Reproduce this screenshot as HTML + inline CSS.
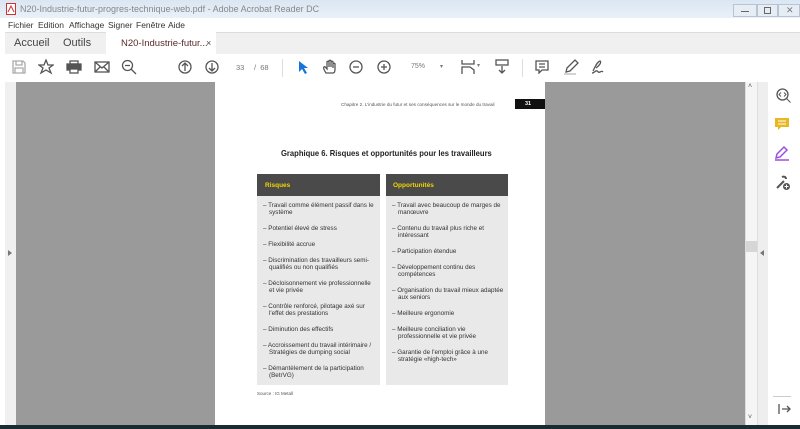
<!DOCTYPE html>
<html><head><meta charset="utf-8"><style>
*{margin:0;padding:0;box-sizing:border-box}
body{width:800px;height:429px;overflow:hidden;background:#fff;font-family:"Liberation Sans",Arial,sans-serif;position:relative}
.abs{position:absolute}
.title{left:0;top:0;width:800px;height:18px;background:linear-gradient(#dbe6f3,#e9f0f8);font-size:9px;color:#888;line-height:18px;padding-left:20px}
.menu{left:0;top:18px;width:800px;height:14px;font-size:8.5px;color:#333;line-height:14px}
.tabs{left:5px;top:32px;width:795px;height:22px;background:#f0f0f0;border-top:1px solid #ddd}
.tb{left:0;top:54px;width:800px;height:28px;background:#fff}
.ic{position:absolute;stroke:#555;fill:none;stroke-width:1.3}
.p li{list-style:none;font-size:6.3px;color:#333;line-height:7.3px;margin-bottom:8.5px;padding-left:6px;text-indent:-6px}
</style></head><body>
<div class="abs title">N20-Industrie-futur-progres-technique-web.pdf - Adobe Acrobat Reader DC</div>
<svg class="abs" style="left:6px;top:3px" width="10" height="12"><rect x="0.5" y="0.5" width="9" height="11" fill="#fff" stroke="#c33"/><path d="M2 9 L5 3 L8 9" stroke="#c33" fill="none"/></svg>
<div class="abs" style="left:733px;top:4px;width:24px;height:13px;border:1px solid #b8c4d2;background:#e7edf5"></div>
<div class="abs" style="left:757px;top:4px;width:21px;height:13px;border:1px solid #b8c4d2;background:#e7edf5"></div>
<div class="abs" style="left:778px;top:4px;width:22px;height:13px;border:1px solid #b8c4d2;background:#e7edf5"></div>
<div class="abs" style="left:741px;top:11px;width:8px;height:1px;background:#666"></div>
<div class="abs" style="left:764px;top:7px;width:7px;height:7px;border:1px solid #666"></div>
<div class="abs" style="left:786px;top:5px;font-size:9px;color:#777">✕</div>
<div class="abs menu"><span style="position:absolute;left:8px">Fichier</span><span style="position:absolute;left:38px">Edition</span><span style="position:absolute;left:69px">Affichage</span><span style="position:absolute;left:108px">Signer</span><span style="position:absolute;left:136px">Fenêtre</span><span style="position:absolute;left:168px">Aide</span></div>
<div class="abs tabs"></div>
<div class="abs" style="left:14px;top:37px;font-size:11px;color:#444">Accueil</div>
<div class="abs" style="left:63px;top:37px;font-size:11px;color:#444">Outils</div>
<div class="abs" style="left:106px;top:32px;width:110px;height:23px;background:#fff"></div>
<div class="abs" style="left:121px;top:38px;font-size:9.5px;color:#5a2a2a">N20-Industrie-futur...</div>
<div class="abs" style="left:206px;top:38px;font-size:9px;color:#444">×</div>
<div class="abs tb"></div>
<svg class="ic" style="left:12px;top:60px" width="14" height="14"><path d="M1 1h10l2 2v10H1z M4 1v4h6V1 M3 13V8h8v5" stroke="#aaa"/></svg>
<svg class="ic" style="left:38px;top:59px" width="16" height="16"><path d="M8 1l2 5h5l-4 3 2 5-5-3-5 3 2-5-4-3h5z"/></svg>
<svg class="ic" style="left:66px;top:60px" width="16" height="14"><rect x="1" y="4" width="14" height="6" fill="#555"/><rect x="4" y="1" width="8" height="3"/><rect x="4" y="9" width="8" height="4" fill="#fff"/></svg>
<svg class="ic" style="left:94px;top:61px" width="16" height="12"><rect x="1" y="1" width="14" height="10"/><path d="M1 1l7 6 7-6M1 11l5-5M15 11l-5-5"/></svg>
<svg class="ic" style="left:121px;top:59px" width="16" height="16"><circle cx="6.5" cy="6.5" r="5"/><path d="M10 10l5 5M4 6.5h5"/></svg>
<svg class="ic" style="left:178px;top:60px" width="14" height="14"><circle cx="7" cy="7" r="6"/><path d="M7 11V3M4 6l3-3 3 3"/></svg>
<svg class="ic" style="left:205px;top:60px" width="14" height="14"><circle cx="7" cy="7" r="6"/><path d="M7 3v8M4 8l3 3 3-3"/></svg>
<div class="abs" style="left:236px;top:63px;font-size:7.5px;color:#777">33</div>
<div class="abs" style="left:254px;top:63px;font-size:7.5px;color:#777">/ &nbsp;68</div>
<div class="abs" style="left:282px;top:59px;width:1px;height:18px;background:#ddd"></div>
<svg style="position:absolute;left:298px;top:60px" width="10" height="14"><path d="M1 1v11l3-3 3 5 2-1-3-5h4z" fill="#1a73d9"/></svg>
<svg class="ic" style="left:322px;top:59px" width="16" height="16"><path d="M4 14c-2-3-3-5-2-6 1-1 2 1 3 2V3c0-1 2-1 2 0v5V2c0-1 2-1 2 0v6V3c0-1 2-1 2 0v6V5c0-1 2-1 2 0v5c0 3-1 4-2 4z"/></svg>
<svg class="ic" style="left:349px;top:60px" width="14" height="14"><circle cx="7" cy="7" r="6"/><path d="M4 7h6"/></svg>
<svg class="ic" style="left:377px;top:60px" width="14" height="14"><circle cx="7" cy="7" r="6"/><path d="M4 7h6M7 4v6"/></svg>
<div class="abs" style="left:411px;top:63px;font-size:7px;color:#777">75%</div>
<div class="abs" style="left:440px;top:63px;font-size:6px;color:#777">▾</div>
<svg class="ic" style="left:461px;top:59px" width="14" height="16"><path d="M1 1v4h12V1M1 15v-7h8l4 3v4"/></svg>
<div class="abs" style="left:477px;top:62px;font-size:6px;color:#777">▾</div>
<svg class="ic" style="left:495px;top:59px" width="14" height="16"><rect x="1" y="1" width="12" height="5"/><path d="M7 7v7M4 11l3 3 3-3"/></svg>
<div class="abs" style="left:522px;top:59px;width:1px;height:18px;background:#ddd"></div>
<svg class="ic" style="left:535px;top:60px" width="14" height="14"><path d="M1 1h12v9H7l-3 3v-3H1z M4 4h6M4 7h6"/></svg>
<svg class="ic" style="left:563px;top:59px" width="16" height="16"><path d="M3 13l1-4 8-8 3 3-8 8z"/><path d="M1 15h12" stroke="#bbb"/></svg>
<svg class="ic" style="left:590px;top:59px" width="18" height="16"><path d="M3 12c2-4 4-9 7-10 2 1-1 5-4 7M2 14c3 0 3-3 5-2s1 2 3 1 2-1 3 0"/></svg>
<div class="abs" style="left:5px;top:82px;width:11px;height:343px;background:#f0f0f0"></div>
<div class="abs" style="left:8px;top:250px;width:0;height:0;border-left:4px solid #777;border-top:3px solid transparent;border-bottom:3px solid transparent"></div>
<div class="abs" style="left:16px;top:82px;width:199px;height:343px;background:#9a9a9a"></div>
<div class="abs" style="left:545px;top:82px;width:200px;height:343px;background:#9a9a9a"></div>
<div class="abs" style="left:745px;top:82px;width:12px;height:343px;background:#f5f5f5;border-left:1px solid #ddd"></div>
<div class="abs" style="left:746px;top:241px;width:11px;height:11px;background:#d6d6d6"></div>
<div class="abs" style="left:748px;top:83px;font-size:7px;color:#555">˄</div>
<div class="abs" style="left:748px;top:414px;font-size:7px;color:#555">˅</div>
<div class="abs" style="left:757px;top:82px;width:11px;height:343px;background:#eeeeee;border-left:1px solid #ddd"></div>
<div class="abs" style="left:760px;top:250px;width:0;height:0;border-right:4px solid #777;border-top:3px solid transparent;border-bottom:3px solid transparent"></div>
<svg class="ic" style="left:776px;top:88px" width="16" height="16"><circle cx="6.5" cy="6.5" r="5.5"/><path d="M10.5 10.5l4 4M5 4.5l-2 2 2 2M8 4.5l2 2-2 2" stroke-width="1"/></svg>
<svg style="position:absolute;left:775px;top:118px" width="14" height="14"><path d="M0 0h14v9H6l-3 3V9H0z" fill="#e8b722"/><path d="M3 3h8M3 6h8" stroke="#fff"/></svg>
<svg style="position:absolute;left:774px;top:145px" width="16" height="16"><path d="M2 13l1-4 7-7 3 3-7 7zM1 15h14" stroke="#9b4fe0" fill="none" stroke-width="1.5"/></svg>
<svg style="position:absolute;left:775px;top:175px" width="16" height="16"><path d="M2 13l7-7M7 2c2-1 4 0 4 2" stroke="#555" stroke-width="2" fill="none"/><circle cx="11.5" cy="11.5" r="3.5" fill="#555"/><path d="M9.5 11.5h4M11.5 9.5v4" stroke="#fff"/></svg>
<div class="abs" style="left:773px;top:396px;width:18px;height:1px;background:#ccc"></div>
<svg class="ic" style="left:778px;top:403px" width="14" height="12"><path d="M1 1v10M4 6h8M9 3l3 3-3 3"/></svg>
<div class="abs" style="left:0;top:425px;width:800px;height:4px;background:#1c2a33"></div>
<div class="abs" style="left:215px;top:82px;width:330px;height:343px;background:#fff"></div>
<div class="abs" style="left:341px;top:102px;font-size:4.6px;color:#555">Chapitre 2. L'industrie du futur et ses conséquences sur le monde du travail</div>
<div class="abs" style="left:515px;top:99px;width:30px;height:10px;background:#111;color:#fff;font-size:5.5px;font-weight:bold;padding:2px 0 0 10px">31</div>
<div class="abs" style="left:281px;top:148px;font-size:8.3px;font-weight:bold;color:#222;transform:scaleX(.92);transform-origin:left">Graphique 6. Risques et opportunités pour les travailleurs</div>
<div class="abs" style="left:257px;top:174px;width:123px;height:211px;background:#e9e9e9"></div>
<div class="abs" style="left:257px;top:174px;width:123px;height:22px;background:#4a4a4a"></div>
<div class="abs" style="left:265px;top:182px;font-size:6.5px;font-weight:bold;color:#f2d600">Risques</div>
<div class="abs" style="left:386px;top:174px;width:122px;height:211px;background:#e9e9e9"></div>
<div class="abs" style="left:386px;top:174px;width:122px;height:22px;background:#4a4a4a"></div>
<div class="abs" style="left:393px;top:182px;font-size:6.5px;font-weight:bold;color:#f2d600">Opportunités</div>
<ul class="abs p" style="left:263px;top:202px;width:113px">
<li>– Travail comme élément passif dans le système</li>
<li>– Potentiel élevé de stress</li>
<li>– Flexibilité accrue</li>
<li>– Discrimination des travailleurs semi-qualifiés ou non qualifiés</li>
<li>– Décloisonnement vie professionnelle et vie privée</li>
<li>– Contrôle renforcé, pilotage axé sur l'effet des prestations</li>
<li>– Diminution des effectifs</li>
<li>– Accroissement du travail intérimaire / Stratégies de dumping social</li>
<li>– Démantèlement de la participation (BetrVG)</li>
</ul>
<ul class="abs p" style="left:392px;top:202px;width:112px">
<li>– Travail avec beaucoup de marges de manœuvre</li>
<li>– Contenu du travail plus riche et intéressant</li>
<li>– Participation étendue</li>
<li>– Développement continu des compétences</li>
<li>– Organisation du travail mieux adaptée aux seniors</li>
<li>– Meilleure ergonomie</li>
<li>– Meilleure conciliation vie professionnelle et vie privée</li>
<li>– Garantie de l'emploi grâce à une stratégie «high-tech»</li>
</ul>
<div class="abs" style="left:257px;top:391px;font-size:4.5px;color:#555">Source : IG Metall</div>
</body></html>
